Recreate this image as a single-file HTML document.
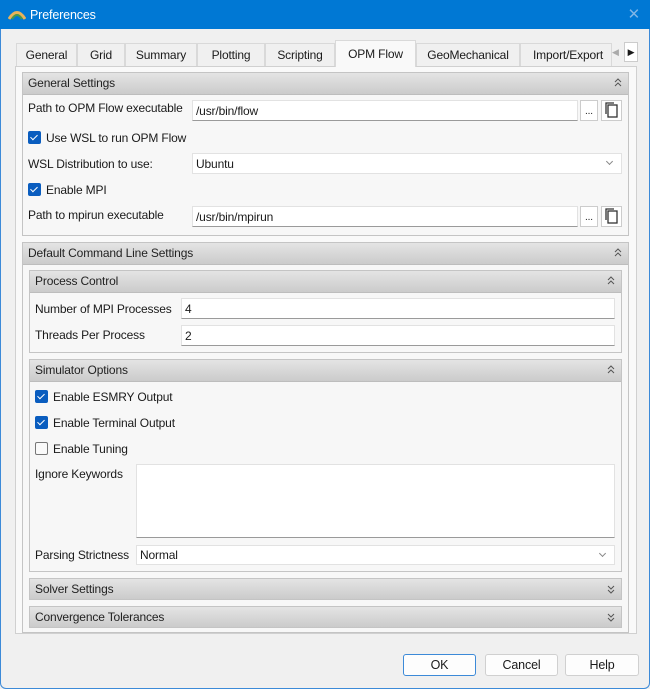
<!DOCTYPE html>
<html><head><style>
*{box-sizing:border-box;margin:0;padding:0}
body{width:650px;height:689px;background:#f0f0f0;font-family:"Liberation Sans",sans-serif;font-size:12px;letter-spacing:-0.15px;color:#1a1a1a;position:relative;overflow:hidden}
.a{position:absolute}
.title{left:0;top:0;width:650px;height:29px;background:#0078d4;color:#fff}
.win{left:0;top:29px;width:650px;height:660px;border:1px solid #3c8ad8;border-top:none;border-radius:0 0 6px 6px}
.tab{top:43px;height:23px;border:1px solid #d9d9d9;border-bottom:none;background:#f0f0f0;text-align:center;line-height:22px;font-size:12px}
.pane{left:15px;top:66px;width:622px;height:568px;border:1px solid #d0d0d0;background:#f9f9f9}
.grp{border:1px solid #c4c4c4;background:#f7f7f7}
.hdr{background:linear-gradient(#e4e4e4,#cbcbcb);border-bottom:1px solid #bdbdbd;height:22px;line-height:21px;padding-left:5px;font-size:12px;color:#222}
.chev{position:absolute;right:6px;top:5px;width:8px;height:10px}
.inp{background:#fff;border:1px solid #e2e2e2;border-bottom:1px solid #9a9a9a;height:21px;line-height:20px;padding-left:3px}
.cb{width:13px;height:13px;background:#0a5dbf;border-radius:2px}
.cb::after{content:"";position:absolute;left:4px;top:1.5px;width:3px;height:6px;border:solid #fff;border-width:0 1.5px 1.5px 0;transform:rotate(45deg)}
.cbo{width:13px;height:13px;border:1px solid #777;border-radius:2px;background:#fafafa}
.btn{top:654px;height:22px;background:#fdfdfd;border:1px solid #d0d0d0;border-radius:3px;text-align:center;line-height:20px;font-size:12.5px}
.dd{position:absolute;right:9px;top:5px;width:5px;height:5px;border:solid #888;border-width:0 1px 1px 0;transform:rotate(45deg)}
</style></head><body>
<div class="a title"><svg class="a" style="left:8px;top:8px" width="18" height="12" viewBox="0 0 18 12"><path d="M1 11 Q9 -2 17 11" stroke="#e9b35a" stroke-width="3" fill="none"/><path d="M4 11 Q9 3 14 11" stroke="#4a9a4a" stroke-width="2" fill="none"/></svg><span class="a" style="left:30px;top:8px;font-size:12.5px">Preferences</span><span class="a" style="right:10px;top:5px;color:#7fb5e6;font-size:15px">✕</span></div>
<div class="a win"></div>
<div class="a pane"></div>
<div class="a tab" style="left:16px;width:61px">General</div>
<div class="a tab" style="left:77px;width:48px">Grid</div>
<div class="a tab" style="left:125px;width:72px">Summary</div>
<div class="a tab" style="left:197px;width:68px">Plotting</div>
<div class="a tab" style="left:265px;width:70px">Scripting</div>
<div class="a tab" style="left:335px;width:81px;top:40px;height:27px;background:#f9f9f9;line-height:26px">OPM Flow</div>
<div class="a tab" style="left:416px;width:104px">GeoMechanical</div>
<div class="a tab" style="left:520px;width:92px;text-align:left;padding-left:12px;overflow:hidden;white-space:nowrap">Import/Export</div>
<div class="a" style="left:612px;top:47px;font-size:9px;color:#aaa">◀</div>
<div class="a" style="left:624px;top:42px;width:14px;height:20px;background:#fff;border:1px solid #ccc;font-size:9px;line-height:18px;text-align:center">▶</div>

<div class="a grp" style="left:22px;top:72px;width:607px;height:164px"><div class="hdr">General Settings</div><svg class="chev" viewBox="0 0 8 10"><path d="M1 4 L4 1 L7 4 M1 8 L4 5 L7 8" stroke="#555" fill="none"/></svg></div>
<span class="a" style="left:28px;top:101px">Path to OPM Flow executable</span>
<div class="a inp" style="left:192px;top:100px;width:386px">/usr/bin/flow</div>
<div class="a" style="left:580px;top:100px;width:18px;height:21px;background:#fff;border:1px solid #ccc;text-align:center;font-size:10px;line-height:22px">...</div>
<svg class="a" style="left:601px;top:100px" width="21" height="21"><rect x=".5" y=".5" width="20" height="20" fill="#fff" stroke="#ccc"/><rect x="7" y="5" width="9" height="12" fill="none" stroke="#333" stroke-width="1.3"/><path d="M5 14 V3 H13" fill="none" stroke="#333" stroke-width="1.3"/></svg>
<div class="a cb" style="left:28px;top:131px"></div><span class="a" style="left:46px;top:131px">Use WSL to run OPM Flow</span>
<span class="a" style="left:28px;top:157px">WSL Distribution to use:</span>
<div class="a inp" style="left:192px;top:153px;width:430px;border-bottom-color:#e2e2e2">Ubuntu<span class="dd"></span></div>
<div class="a cb" style="left:28px;top:183px"></div><span class="a" style="left:46px;top:183px">Enable MPI</span>
<span class="a" style="left:28px;top:208px">Path to mpirun executable</span>
<div class="a inp" style="left:192px;top:206px;width:386px">/usr/bin/mpirun</div>
<div class="a" style="left:580px;top:206px;width:18px;height:21px;background:#fff;border:1px solid #ccc;text-align:center;font-size:10px;line-height:22px">...</div>
<svg class="a" style="left:601px;top:206px" width="21" height="21"><rect x=".5" y=".5" width="20" height="20" fill="#fff" stroke="#ccc"/><rect x="7" y="5" width="9" height="12" fill="none" stroke="#333" stroke-width="1.3"/><path d="M5 14 V3 H13" fill="none" stroke="#333" stroke-width="1.3"/></svg>

<div class="a grp" style="left:22px;top:242px;width:607px;height:391px"><div class="hdr">Default Command Line Settings</div><svg class="chev" viewBox="0 0 8 10"><path d="M1 4 L4 1 L7 4 M1 8 L4 5 L7 8" stroke="#555" fill="none"/></svg></div>
<div class="a grp" style="left:29px;top:270px;width:593px;height:83px"><div class="hdr">Process Control</div><svg class="chev" viewBox="0 0 8 10"><path d="M1 4 L4 1 L7 4 M1 8 L4 5 L7 8" stroke="#555" fill="none"/></svg></div>
<span class="a" style="left:35px;top:302px">Number of MPI Processes</span>
<div class="a inp" style="left:181px;top:298px;width:434px">4</div>
<span class="a" style="left:35px;top:328px">Threads Per Process</span>
<div class="a inp" style="left:181px;top:325px;width:434px">2</div>

<div class="a grp" style="left:29px;top:359px;width:593px;height:213px"><div class="hdr">Simulator Options</div><svg class="chev" viewBox="0 0 8 10"><path d="M1 4 L4 1 L7 4 M1 8 L4 5 L7 8" stroke="#555" fill="none"/></svg></div>
<div class="a cb" style="left:35px;top:390px"></div><span class="a" style="left:53px;top:390px">Enable ESMRY Output</span>
<div class="a cb" style="left:35px;top:416px"></div><span class="a" style="left:53px;top:416px">Enable Terminal Output</span>
<div class="a cbo" style="left:35px;top:442px"></div><span class="a" style="left:53px;top:442px">Enable Tuning</span>
<span class="a" style="left:35px;top:467px">Ignore Keywords</span>
<div class="a" style="left:136px;top:464px;width:479px;height:74px;background:#fff;border:1px solid #e2e2e2;border-bottom-color:#9a9a9a"></div>
<span class="a" style="left:35px;top:548px">Parsing Strictness</span>
<div class="a inp" style="left:136px;top:545px;width:479px;height:20px;line-height:19px;border-bottom-color:#e2e2e2">Normal<span class="dd"></span></div>

<div class="a grp" style="left:29px;top:578px;width:593px;height:22px"><div class="hdr" style="height:20px;line-height:20px;border:none">Solver Settings</div><svg class="chev" viewBox="0 0 8 10"><path d="M1 2 L4 5 L7 2 M1 6 L4 9 L7 6" stroke="#555" fill="none"/></svg></div>
<div class="a grp" style="left:29px;top:606px;width:593px;height:22px"><div class="hdr" style="height:20px;line-height:20px;border:none">Convergence Tolerances</div><svg class="chev" viewBox="0 0 8 10"><path d="M1 2 L4 5 L7 2 M1 6 L4 9 L7 6" stroke="#555" fill="none"/></svg></div>

<div class="a btn" style="left:403px;width:73px;border-color:#3c8ad8">OK</div>
<div class="a btn" style="left:485px;width:73px">Cancel</div>
<div class="a btn" style="left:565px;width:74px">Help</div>
</body></html>
